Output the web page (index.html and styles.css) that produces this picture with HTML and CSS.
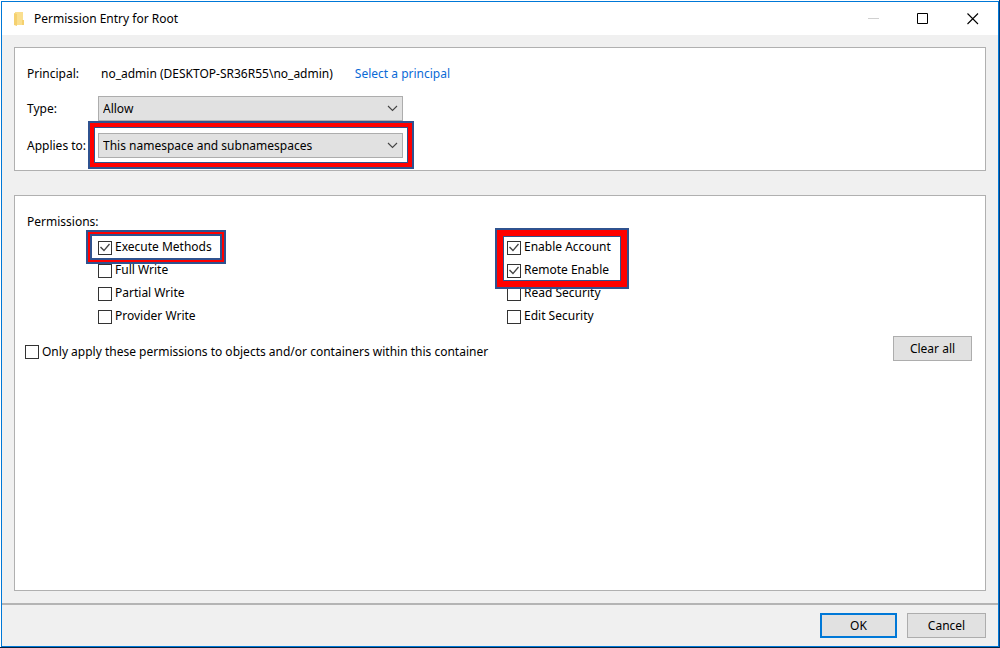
FILE: index.html
```
<!DOCTYPE html>
<html lang="en">
<head>
  <meta charset="UTF-8">
  <title>Permission Entry for Root</title>
  <link rel="stylesheet" href="styles.css">
</head>
<body>
  <div class="window">
    <header class="titlebar">
      <svg class="folder" width="11" height="14" viewBox="0 0 11 14">
        <path d="M1 0h8v8h1v5H1z" fill="#fadf8f"/>
        <path d="M0 1l3 1v12l-3-1z" fill="#f5d170"/>
        <path d="M8 8h2v5H8z" fill="#f5d170"/>
      </svg>
      <h1>Permission Entry for Root</h1>
      <div class="window-buttons">
        <button type="button" aria-label="Minimize" disabled>
          <svg width="12" height="12" viewBox="0 0 12 12"><path d="M1 5.500h11" stroke="#d0d0d0"/></svg>
        </button>
        <button type="button" aria-label="Maximize">
          <svg width="12" height="12" viewBox="0 0 12 12"><path d="M.5.5h10v10H.5z" fill="none" stroke="#000"/></svg>
        </button>
        <button type="button" aria-label="Close">
          <svg width="12" height="12" viewBox="0 0 12 12"><path d="M.5.5l10.500 10.500M11 .5L.5 11" stroke="#000" stroke-width="1.100"/></svg>
        </button>
      </div>
    </header>

    <main>
      <section class="panel fields">
        <span>Principal:</span>
        <div class="principal">
          <span>no_admin (DESKTOP-SR36R55\no_admin)</span>
          <a href="#">Select a principal</a>
        </div>

        <label for="type">Type:</label>
        <div class="dropdown">
          <select id="type">
            <option>Allow</option>
            <option>Deny</option>
          </select>
          <svg class="arrow" width="11" height="7" viewBox="0 0 11 7"><path d="M1 1l4.500 4.500L10 1" fill="none" stroke="#444" stroke-width="1.100"/></svg>
        </div>

        <label for="applies">Applies to:</label>
        <div class="dropdown">
          <select id="applies">
            <option>This namespace and subnamespaces</option>
            <option>This namespace only</option>
          </select>
          <svg class="arrow" width="11" height="7" viewBox="0 0 11 7"><path d="M1 1l4.500 4.500L10 1" fill="none" stroke="#444" stroke-width="1.100"/></svg>
          <div class="mark mark-applies"></div>
        </div>
      </section>

      <section class="panel permissions">
        <h2>Permissions:</h2>
        <div class="columns">
          <div class="column">
            <div class="group">
              <label class="check"><input type="checkbox" checked>Execute Methods</label>
              <div class="mark mark-execute"></div>
            </div>
            <label class="check"><input type="checkbox">Full Write</label>
            <label class="check"><input type="checkbox">Partial Write</label>
            <label class="check"><input type="checkbox">Provider Write</label>
          </div>
          <div class="column">
            <div class="group">
              <label class="check"><input type="checkbox" checked>Enable Account</label>
              <label class="check"><input type="checkbox" checked>Remote Enable</label>
              <div class="mark mark-enable"></div>
            </div>
            <label class="check"><input type="checkbox">Read Security</label>
            <label class="check"><input type="checkbox">Edit Security</label>
          </div>
        </div>
        <div class="apply-row">
          <label class="check"><input type="checkbox">Only apply these permissions to objects and/or containers within this container</label>
          <button type="button" class="btn">Clear all</button>
        </div>
      </section>
    </main>

    <footer>
      <button type="button" class="btn btn-default">OK</button>
      <button type="button" class="btn">Cancel</button>
    </footer>
  </div>
</body>
</html>
```
FILE: styles.css
```
* {
  box-sizing: border-box;
}
body {
  margin: 0;
  min-height: 100vh;
  display: flex;
  padding: 1px 0 0 1px;
  border-right: 1px solid #063f7c;
  border-bottom: 1px solid #04203f;
  background: #fff;
  color: #000;
  font: 12px/20px "Noto Sans", "Open Sans", sans-serif;
}
button, select, input {
  font: inherit;
  color: inherit;
  margin: 0;
}
h1, h2 {
  margin: 0;
  font-size: 12px;
  font-weight: normal;
}
a {
  color: #0a6ad6;
  text-decoration: none;
}

.window {
  flex: 1;
  display: flex;
  flex-direction: column;
  border: 1px solid #0078d7;
  background: #f0f0f0;
}

.titlebar {
  display: flex;
  align-items: center;
  height: 33px;
  padding-left: 12px;
  background: #fff;
}
.folder {
  margin-right: 9px;
}
.window-buttons {
  display: flex;
  margin-left: auto;
}
.window-buttons button {
  display: flex;
  align-items: center;
  justify-content: center;
  width: 50px;
  height: 32px;
  padding: 0;
  border: none;
  background: none;
}

main {
  flex: 1;
  display: flex;
  flex-direction: column;
  gap: 24px;
  padding: 12px;
}
.panel {
  border: 1px solid #b0b0b0;
  background: #fff;
}

.fields {
  display: grid;
  grid-template-columns: 71px 305px;
  gap: 12px 0;
  align-items: center;
  padding: 16px 12px 12px;
}
.principal {
  display: flex;
  gap: 22px;
  padding-left: 3px;
  white-space: nowrap;
}
.dropdown {
  position: relative;
  height: 25px;
}
.dropdown select {
  appearance: none;
  width: 100%;
  height: 25px;
  padding: 0 24px 0 4px;
  border: 1px solid #adadad;
  border-radius: 0;
  background: #e1e1e1;
}
.arrow {
  position: absolute;
  top: 9px;
  right: 5px;
  pointer-events: none;
}

.permissions {
  flex: 1;
  padding: 16px 13px 16px 10px;
}
.permissions h2 {
  margin: 0 2px 3px;
}
.columns {
  display: grid;
  grid-template-columns: 409px 1fr;
  padding-left: 73px;
}
.group {
  position: relative;
  width: fit-content;
}
.check {
  display: flex;
  align-items: center;
  gap: 3px;
  width: fit-content;
  height: 23px;
}
.check input {
  appearance: none;
  width: 14px;
  height: 14px;
  border: 1px solid #333;
  background: #fff;
}
.columns .check input {
  margin-top: 2px;
}
.check input:checked::after {
  content: "";
  display: block;
  width: 12px;
  height: 12px;
  background: #444;
  clip-path: polygon(1px 6px, 2px 5px, 5px 8px, 10px 2px, 11px 3px, 5px 10px);
}
.apply-row {
  display: flex;
  align-items: flex-start;
  justify-content: space-between;
  margin-top: 9px;
}
.apply-row .check {
  margin-top: 4px;
}

/* red frames drawn over the important settings */
.mark {
  position: absolute;
  border: 2px solid #2f528f;
  pointer-events: none;
  z-index: 1;
}
.mark-applies {
  inset: -12px -11px -11px -10px;
  box-shadow: inset 0 0 0 4px #f00, inset 0 0 0 5px #2f528f;
}
.mark-execute {
  top: -5px;
  left: -12px;
  width: 140px;
  height: 34px;
  box-shadow: inset 0 0 0 2px #f00, inset 0 0 0 4px #2f528f;
}
.mark-enable {
  top: -7px;
  left: -12px;
  width: 134px;
  height: 61px;
  box-shadow: inset 0 0 0 6px #f00, inset 0 0 0 7px #2f528f;
}

.btn {
  width: 79px;
  height: 25px;
  padding: 0;
  border: 1px solid #adadad;
  background: #e1e1e1;
}
.btn-default {
  width: 77px;
  border: 2px solid #0078d7;
}

footer {
  display: flex;
  justify-content: flex-end;
  gap: 10px;
  padding: 8px 12px;
  border-top: 2px solid #b4b4b4;
}
```
